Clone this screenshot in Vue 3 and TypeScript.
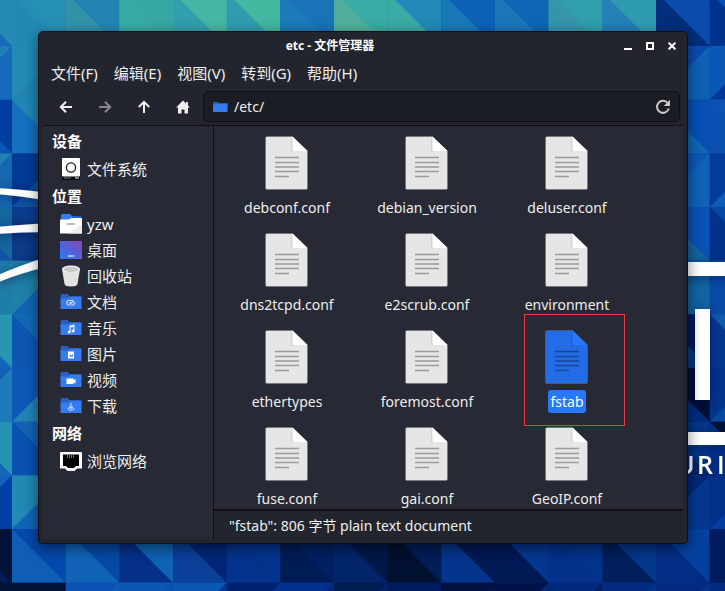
<script setup lang="ts">
import { ref } from 'vue'

type Slope = 'fall' | 'rise'
type Tile = [col: number, row: number, slope: Slope, upper: string, lower: string]

const pitch = 53.67
const tiles: Tile[] = [
  [-1, -1, 'fall', '#2489b4', '#1769bb'], [0, -1, 'fall', '#2690b4', '#2389b4'],
  [1, -1, 'fall', '#2384b3', '#3391a8'], [2, -1, 'fall', '#37a7a4', '#38aaa4'],
  [3, -1, 'fall', '#47b5a3', '#329fae'], [4, -1, 'fall', '#43b7a0', '#319bad'],
  [5, -1, 'fall', '#1a72b8', '#1c7bb8'], [6, -1, 'fall', '#3aaba5', '#52ae9b'],
  [7, -1, 'fall', '#2289b8', '#39aaa4'], [8, -1, 'fall', '#0c60b5', '#1879b6'],
  [9, -1, 'fall', '#0f66b5', '#1b76b8'], [10, -1, 'fall', '#309fab', '#3693aa'],
  [11, -1, 'fall', '#2e9ab0', '#2580b5'], [12, -1, 'fall', '#0a4bab', '#032e7c'],
  [13, -1, 'fall', '#0a4db0', '#03328c'],
  [-1, 0, 'rise', '#1c7fb8', '#1769bb'], [0, 0, 'rise', '#238bb3', '#2085b4'],
  [-1, 1, 'fall', '#003fa0', '#0b55b8'], [0, 1, 'fall', '#2087b5', '#1570bd'],
  [-1, 2, 'rise', '#1f80b2', '#1567b0'], [0, 2, 'rise', '#023a94', '#1257a8'],
  [-1, 3, 'fall', '#14679f', '#0e53a5'], [0, 3, 'fall', '#0a3d93', '#0c3a88'],
  [-1, 4, 'rise', '#1f7aa8', '#1f7ea8'], [0, 4, 'rise', '#1f80a8', '#1265b3'],
  [-1, 5, 'fall', '#2696b3', '#1265b8'], [0, 5, 'fall', '#1269b5', '#0e56b3'],
  [-1, 6, 'rise', '#1560b8', '#1d7ab8'], [0, 6, 'rise', '#0d59b8', '#2283b5'],
  [-1, 7, 'fall', '#2493b3', '#1265b8'], [0, 7, 'fall', '#1163b5', '#0a50b0'],
  [-1, 8, 'rise', '#1260b8', '#003fa5'], [0, 8, 'rise', '#2288b5', '#1066b5'],
  [12, 0, 'rise', '#0a4aae', '#0d62b3'], [13, 0, 'rise', '#0a57b5', '#043898'],
  [12, 1, 'fall', '#0650b5', '#0f66b5'], [13, 1, 'fall', '#0d53b3', '#0b4fb0'],
  [12, 2, 'rise', '#0b57b5', '#0f62b8'], [13, 2, 'rise', '#043a98', '#0d5cb8'],
  [12, 3, 'fall', '#0a52b5', '#1465a0'], [13, 3, 'fall', '#0548a5', '#04318a'],
  [12, 4, 'fall', '#1165a3', '#1163a0'], [13, 4, 'fall', '#0a4fa8', '#084ba5'],
  [12, 5, 'fall', '#01205f', '#03418c'], [13, 5, 'fall', '#0f5aaa', '#04388f'],
  [12, 6, 'fall', '#001038', '#002d80'], [13, 6, 'rise', '#04338b', '#0548a0'],
  [12, 7, 'fall', '#03388c', '#01286f'], [13, 7, 'fall', '#001235', '#02308a'],
  [12, 8, 'rise', '#02297c', '#04388f'], [13, 8, 'rise', '#02308a', '#043d9f'],
  [-1, 9, 'fall', '#001238', '#001c58'], [0, 9, 'fall', '#0548ab', '#0f5db5'],
  [1, 9, 'fall', '#0549a5', '#1063b5'], [2, 9, 'fall', '#0f63b5', '#04308a'],
  [3, 9, 'fall', '#022675', '#0a3f9a'], [4, 9, 'fall', '#03348f', '#03338c'],
  [5, 9, 'fall', '#012062', '#011c55'], [6, 9, 'fall', '#01184a', '#01246b'],
  [7, 9, 'fall', '#001e57', '#00102f'], [8, 9, 'fall', '#001a55', '#05348c'],
  [9, 9, 'fall', '#04378f', '#001a55'], [10, 9, 'fall', '#03338c', '#03308a'],
  [11, 9, 'fall', '#03388c', '#001f5c'], [12, 9, 'fall', '#0540a0', '#032d85'],
  [13, 9, 'fall', '#001b60', '#001a5c'],
  [-1, 10, 'rise', '#001238', '#001238'], [0, 10, 'rise', '#001238', '#001238'],
  [1, 10, 'rise', '#0b50b3', '#0e5db5'], [2, 10, 'rise', '#0a57b5', '#0a50b0'],
  [3, 10, 'rise', '#0a57b5', '#04358f'], [4, 10, 'rise', '#002070', '#04308f'],
  [5, 10, 'rise', '#04308f', '#022878'], [6, 10, 'rise', '#001c50', '#01246b'],
  [7, 10, 'rise', '#001a60', '#001a60'], [8, 10, 'rise', '#001040', '#001648'],
  [9, 10, 'rise', '#001248', '#022a7c'], [10, 10, 'rise', '#022a7c', '#001f5c'],
  [11, 10, 'rise', '#022a80', '#04348c'], [12, 10, 'rise', '#022a80', '#04348c'],
  [13, 10, 'rise', '#022a80', '#04348c'],
]

const left = (t: Tile) => 12 + t[0] * pitch
const top = (t: Tile) => 46 + t[1] * pitch

function lowerHalf(t: Tile): string {
  const x = left(t)
  const y = top(t)
  const corner = t[2] === 'fall' ? `${x},${y}` : `${x + pitch},${y}`
  return `${corner} ${x + pitch},${y + pitch} ${x},${y + pitch}`
}

const wordmark = [
  { letter: 'U', x: 676 },
  { letter: 'R', x: 697 },
  { letter: 'I', x: 717 },
]

const menus = ['文件(F)', '编辑(E)', '视图(V)', '转到(G)', '帮助(H)']

const groups = [
  { title: '设备', items: [{ icon: 'disk', name: '文件系统' }] },
  {
    title: '位置',
    items: [
      { icon: 'home', name: 'yzw' },
      { icon: 'desktop', name: '桌面' },
      { icon: 'trash', name: '回收站' },
      { icon: 'documents', name: '文档' },
      { icon: 'music', name: '音乐' },
      { icon: 'pictures', name: '图片' },
      { icon: 'videos', name: '视频' },
      { icon: 'downloads', name: '下载' },
    ],
  },
  { title: '网络', items: [{ icon: 'network', name: '浏览网络' }] },
]
const folderIcons = ['documents', 'music', 'pictures', 'videos', 'downloads']

const files = [
  'debconf.conf', 'debian_version', 'deluser.conf',
  'dns2tcpd.conf', 'e2scrub.conf', 'environment',
  'ethertypes', 'foremost.conf', 'fstab',
  'fuse.conf', 'gai.conf', 'GeoIP.conf',
]

const path = ref('/etc/')
const selected = ref('fstab')
</script>

<template>
  <div class="desktop">
    <svg class="wallpaper" viewBox="0 0 725 591" preserveAspectRatio="xMidYMid slice" aria-hidden="true">
      <defs>
        <filter id="glow" x="-50%" y="-50%" width="200%" height="200%">
          <feDropShadow dx="0" dy="2" stdDeviation="6" flood-color="#001030" flood-opacity="0.5" />
        </filter>
      </defs>
      <g v-for="t in tiles" :key="`${t[0]}:${t[1]}`">
        <rect :x="left(t)" :y="top(t)" width="54" height="54" :fill="t[3]" />
        <polygon :points="lowerHalf(t)" :fill="t[4]" />
      </g>
      <g fill="#fff" filter="url(#glow)">
        <path d="M-4 188 Q18 189 50 193 V201 Q22 196 -4 194Z" />
        <path d="M-4 227 Q18 225 50 223 V232 Q20 232 -4 234Z" />
        <path d="M-4 276 Q18 266 50 256 V266 Q20 273 -4 283Z" />
        <rect x="600" y="262" width="140" height="14" />
        <rect x="695" y="309" width="15" height="91" />
        <rect x="600" y="432" width="140" height="13" />
        <text v-for="w in wordmark" :key="w.letter" class="wordmark" :x="w.x" y="474">{{ w.letter }}</text>
      </g>
    </svg>

    <main class="window">
      <header class="titlebar">
        <h1>etc - 文件管理器</h1>
        <div class="controls">
          <button type="button" aria-label="最小化">
            <svg width="8" height="8" viewBox="0 0 8 8"><path d="M0 6h8v2H0z" fill="#fff" /></svg>
          </button>
          <button type="button" aria-label="最大化">
            <svg width="8" height="8" viewBox="0 0 8 8"><path d="M1 1h6v6H1z" fill="none" stroke="#fff" stroke-width="2" /></svg>
          </button>
          <button type="button" aria-label="关闭">
            <svg width="8" height="8" viewBox="0 0 8 8"><path d="M.6.6l6.8 6.8M7.4.6L.6 7.4" stroke="#fff" stroke-width="2" /></svg>
          </button>
        </div>
      </header>

      <nav class="menubar">
        <button v-for="m in menus" :key="m" type="button">{{ m }}</button>
      </nav>

      <div class="toolbar">
        <button type="button" aria-label="后退">
          <svg width="14" height="14" viewBox="0 0 14 14"><path d="M13 7H2M7 1.8L1.8 7L7 12.2" /></svg>
        </button>
        <button type="button" aria-label="前进" disabled>
          <svg width="14" height="14" viewBox="0 0 14 14"><path d="M1 7h11M7 1.8L12.2 7L7 12.2" /></svg>
        </button>
        <button type="button" aria-label="上级">
          <svg width="14" height="14" viewBox="0 0 14 14"><path d="M7 13V2M1.8 7L7 1.8L12.2 7" /></svg>
        </button>
        <button type="button" aria-label="主目录">
          <svg width="14" height="14" viewBox="0 0 14 14"><path class="solid" d="M7 .5L0 7.5h2V13.500h3.500V9.500h3v4H12V7.500h2L12 5.500V2h-2v1.500z" /></svg>
        </button>
        <div class="location">
          <svg width="15" height="12" viewBox="0 0 15 12">
            <path d="M0 1h5l1.500 1.500H14.500V6H0z" fill="#265ec4" />
            <path d="M0 3.500h5l1.500-1H14.500V11H0z" fill="#367bf0" />
          </svg>
          <input v-model="path" type="text" aria-label="位置" />
          <button type="button" aria-label="重新载入">
            <svg width="16" height="16" viewBox="0 0 16 16">
              <path d="M12.800 4.200A6 6 0 1 0 13.800 9.500" class="reload" />
              <path d="M15 .8V7H8.800z" fill="#c8c9cb" />
            </svg>
          </button>
        </div>
      </div>

      <div class="body">
        <aside class="sidebar">
          <section v-for="g in groups" :key="g.title">
            <h2>{{ g.title }}</h2>
            <ul>
              <li v-for="i in g.items" :key="i.name">
                <a href="#">
                  <svg width="22" height="22" viewBox="0 0 22 22" aria-hidden="true">
                    <g v-if="i.icon === 'disk'">
                      <rect x="2" y="1" width="18" height="21" rx="1" fill="#08090c" />
                      <rect x="2" y="0" width="18" height="18.500" rx="1" fill="#fff" />
                      <circle cx="11" cy="9.500" r="4.600" fill="#fff" stroke="#15171c" stroke-width="1.300" />
                      <path d="M4 20h7" stroke="#777" />
                      <path d="M15 20h4" stroke="#fff" />
                    </g>
                    <g v-else-if="i.icon === 'home'">
                      <path d="M1 2.500Q1 1 2.500 1H10l2 2H21v6H1z" fill="#367bf0" />
                      <path d="M12 3h9v2H12z" fill="#265ec4" />
                      <path d="M0 6.500h9l2-1.500H22V20.500H0z" fill="#fff" />
                      <path d="M22 11V20.500H9z" fill="#ececec" />
                      <rect x="6.500" y="10" width="9" height="2" rx="1" fill="#bdbdbf" />
                    </g>
                    <g v-else-if="i.icon === 'desktop'">
                      <defs>
                        <linearGradient id="screen" x1="0" y1="1" x2="1" y2="0">
                          <stop offset="0.100" stop-color="#2e76f4" />
                          <stop offset="1" stop-color="#8a44b4" />
                        </linearGradient>
                      </defs>
                      <rect y="2" width="22" height="18" fill="url(#screen)" />
                      <path d="M8 17h1.500M10.300 17h1.500M12.600 17h1.500" stroke="#fff" stroke-width="1.600" />
                    </g>
                    <g v-else-if="i.icon === 'trash'">
                      <path d="M2 4L4.500 19Q5 21.500 11 21.500T17.500 19L20 4z" fill="#e3e3e3" />
                      <ellipse cx="11" cy="4" rx="9" ry="3.500" fill="#f4f4f4" />
                      <ellipse cx="11" cy="4.300" rx="7.500" ry="2.600" fill="#c9c9c9" />
                    </g>
                    <g v-else-if="i.icon === 'network'">
                      <path d="M1 2H21Q22 2 22 3V18.500H17L14.500 21H7.500L5 18.500H0V3Q0 2 1 2z" fill="#fff" />
                      <path d="M3 4.500H19V16H16L14 18H8L6 16H3z" fill="#000" />
                      <path d="M7.500 5v3M9.500 5v3M11.500 5v3M13.500 5v3" stroke="#b08c3c" stroke-width=".8" />
                    </g>
                    <g v-else-if="folderIcons.includes(i.icon)">
                      <path d="M.500 4.500Q.500 3 2 3H7.500L9.500 5H20.500Q21.500 5 21.500 6V10H.500z" fill="#2a5fc0" />
                      <path d="M.500 7.500H8L10 6H21.500V18H.500z" fill="#367bf0" />
                      <g v-if="i.icon === 'documents'" fill="none" stroke="#c9dafb" stroke-width="1.100">
                        <path d="M13.500 9.500H9a2.200 2.200 0 0 0 0 4.500H13a1.800 1.800 0 0 0 1.500-2.700Q14 10.700 12.500 10.800L9 12.300H12.500" />
                      </g>
                      <g v-else-if="i.icon === 'music'" fill="#eaf1fe">
                        <path d="M9.500 8.500L14.500 7.500V14h-1.200V10L10.700 10.500V15H9.500z" />
                        <circle cx="9.200" cy="15" r="1.600" />
                        <circle cx="13" cy="14" r="1.500" />
                      </g>
                      <g v-else-if="i.icon === 'pictures'">
                        <path d="M8 8.500h6v7H8z" fill="#fff" />
                        <path d="M9 13.500l1.500-2 1 1 1-1.500 1 2.500z" fill="#367bf0" />
                      </g>
                      <path v-else-if="i.icon === 'videos'" d="M6.500 9.500h7v1.500l2-1v4.500l-2-1V15h-7z" fill="#fff" />
                      <path v-else d="M11 8v5.500M9 11.500l2 2 2-2M8 13q.500 2.300 3 2.300t3-2.300" fill="none" stroke="#c9dafb" stroke-width="1.100" />
                    </g>
                  </svg>
                  <span>{{ i.name }}</span>
                </a>
              </li>
            </ul>
          </section>
        </aside>

        <section class="content">
          <div class="files">
            <button
              v-for="f in files"
              :key="f"
              type="button"
              class="file"
              :class="{ selected: f === selected }"
              @click="selected = f"
            >
              <svg width="44" height="54" viewBox="0 0 44 54" aria-hidden="true">
                <path class="sheet" d="M2 .500H27.500L42.500 15V52Q42.500 53.500 41 53.500H2Q.500 53.500 .500 52V2Q.500 .500 2 .500z" />
                <path d="M26 2V15.500H29L27.500 2z" fill="#000" opacity=".08" />
                <path class="fold" d="M27.500 .500L42.500 15H29Q27.500 15 27.500 13.500z" />
                <g class="lines">
                  <path d="M10 21.500H34M10 26.500H34M10 31H34M10 35.500H34M10 40.500H24" />
                </g>
              </svg>
              <span>{{ f }}</span>
            </button>
          </div>
          <footer class="status">"fstab": 806 字节 plain text document</footer>
        </section>
      </div>
    </main>
  </div>
</template>

<style>
body {
  margin: 0;
  background: #04388f;
}
</style>

<style scoped>
.desktop {
  position: relative;
  display: flex;
  box-sizing: border-box;
  height: 100vh;
  padding: 31px 37px 47px 38px;
  overflow: hidden;
  font-family: "Noto Sans", "Noto Sans CJK SC", sans-serif;
  font-size: 15px;
  line-height: 23px;
  color: #eeeeec;
}

.wallpaper {
  position: absolute;
  inset: 0;
  width: 100%;
  height: 100%;
}

.wordmark {
  font-family: "Open Sans", "Noto Sans", sans-serif;
  font-size: 25px;
  font-weight: 600;
}

button {
  padding: 0;
  border: 0;
  background: none;
  color: inherit;
  font: inherit;
}

svg {
  flex: none;
}

.window {
  position: relative;
  display: flex;
  flex: 1;
  flex-direction: column;
  box-sizing: border-box;
  min-width: 0;
  padding: 0 4px 4px;
  border: 1px solid #0f1014;
  border-radius: 5px 5px 4px 4px;
  background: #23252e;
  box-shadow: 0 4px 14px rgba(0, 0, 0, 0.5);
}

.titlebar {
  display: grid;
  grid-template-columns: 1fr 66px;
  align-items: center;
  height: 27px;
}

.titlebar h1 {
  margin: 0;
  font-size: 12px;
  font-weight: 700;
  line-height: 20px;
  color: #fff;
  text-align: center;
}

.controls {
  display: flex;
}

.controls button {
  display: grid;
  place-items: center;
  width: 22px;
  height: 22px;
}

.menubar {
  display: flex;
  gap: 16px;
  padding: 3px 8px 1px;
}

.toolbar {
  display: flex;
  align-items: center;
  padding: 4px 3px 3px;
  border-top: 1px solid #1f2129;
  border-bottom: 1px solid #0f1014;
}

.toolbar > button {
  display: grid;
  place-items: center;
  width: 39px;
  height: 31px;
}

.toolbar > button path {
  fill: none;
  stroke: #eeeeec;
  stroke-width: 2;
}

.toolbar > button .solid {
  fill: #eeeeec;
  stroke: none;
}

.toolbar > button:disabled path {
  stroke: #85868a;
}

.location {
  display: flex;
  flex: 1;
  align-items: center;
  gap: 6px;
  box-sizing: border-box;
  height: 31px;
  margin-left: 1px;
  padding: 0 8px 0 9px;
  border: 1px solid #0f1014;
  border-radius: 5px;
  background: #1b1d24;
}

.location input {
  flex: 1;
  min-width: 0;
  padding: 0;
  border: 0;
  outline: 0;
  background: none;
  color: inherit;
  font: inherit;
  font-size: 14px;
}

.location button {
  display: grid;
}

.reload {
  fill: none;
  stroke: #c8c9cb;
  stroke-width: 2;
}

.body {
  display: flex;
  flex: 1;
  min-height: 0;
}

.sidebar {
  box-sizing: border-box;
  width: 171px;
  padding-top: 1px;
  border-right: 1px solid #0f1014;
  background: #272934;
}

.sidebar h2 {
  margin: 0;
  padding-left: 9px;
  font-size: 15px;
  font-weight: 700;
  line-height: 29px;
  color: #fff;
}

.sidebar ul {
  margin: 0;
  padding: 0;
  list-style: none;
}

.sidebar a {
  display: flex;
  align-items: center;
  gap: 5px;
  height: 26px;
  padding-left: 17px;
  color: inherit;
  text-decoration: none;
}

.content {
  display: flex;
  flex: 1;
  flex-direction: column;
  min-width: 0;
}

.files {
  display: grid;
  flex: 1;
  grid-template-columns: repeat(auto-fill, 140px);
  grid-auto-rows: 97px;
  min-height: 0;
  padding: 10px 0 0 3px;
  overflow: hidden;
  background: #272934;
}

.file {
  position: relative;
  display: flex;
  flex-direction: column;
  align-items: center;
  gap: 6px;
  font-size: 14px;
}

.file span {
  padding: 0 2px;
  border-radius: 3px;
}

.sheet {
  fill: #e6e6e6;
  stroke: #6c6d73;
  stroke-width: 0.5;
}

.fold {
  fill: #fff;
}

.lines {
  fill: none;
  stroke: #9b9b9b;
  stroke-width: 1.3;
}

.selected span {
  background: #2777ff;
  color: #fff;
}

.selected .sheet {
  fill: #246be6;
}

.selected .fold {
  fill: #2777ff;
}

.selected .lines {
  stroke: #184799;
}

.selected::after {
  position: absolute;
  top: -16px;
  left: 27px;
  box-sizing: border-box;
  width: 101px;
  height: 112px;
  border: 1px solid #f23a3a;
  content: "";
}

.status {
  padding: 3px 15px 2px;
  border-top: 2px solid #0f1014;
  font-size: 14px;
}
</style>
